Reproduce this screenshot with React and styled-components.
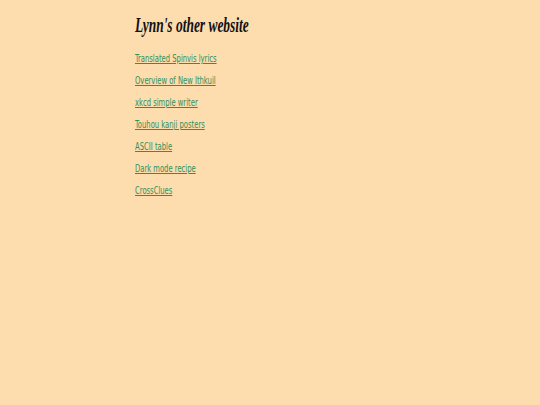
import React from 'react';
import styled, { createGlobalStyle } from 'styled-components';

const links = [
  'Translated Spinvis lyrics',
  'Overview of New Ithkuil',
  'xkcd simple writer',
  'Touhou kanji posters',
  'ASCII table',
  'Dark mode recipe',
  'CrossClues',
];

const GlobalStyle = createGlobalStyle`
  html, body {
    margin: 0;
    padding: 0;
    background: #fddcae;
  }
`;

const Page = styled.div`
  min-height: 405px;
  background: #fddcae;
  padding: 13px 0 0 135px;
  box-sizing: border-box;
`;

const Column = styled.main`
  display: flex;
  flex-direction: column;
  align-items: flex-start;
`;

// narrow faces: both lines of text are squeezed horizontally
const Title = styled.h1`
  margin: 0 0 14px;
  font-family: 'Liberation Serif', serif;
  font-style: italic;
  font-weight: bold;
  font-size: 21px;
  line-height: 24px;
  color: #111;
  transform: scaleX(0.64);
  transform-origin: left top;
  white-space: nowrap;
`;

const LinkList = styled.ul`
  list-style: none;
  margin: 0;
  padding: 0;
  display: flex;
  flex-direction: column;
  gap: 8px;
`;

const Item = styled.li`
  display: flex;
  height: 14px;
`;

const Link = styled.a`
  display: inline-block;
  font-family: 'DejaVu Sans', sans-serif;
  font-stretch: condensed;
  font-size: 10.5px;
  line-height: 14px;
  color: #31905a;
  text-decoration: underline;
  white-space: nowrap;
  transform: scaleX(0.72);
  transform-origin: left top;
`;

export default function App() {
  return (
    <>
      <GlobalStyle />
      <Page>
        <Column>
          <Title>Lynn's other website</Title>
          <LinkList>
            {links.map((name) => (
              <Item key={name}>
                <Link href="#">{name}</Link>
              </Item>
            ))}
          </LinkList>
        </Column>
      </Page>
    </>
  );
}
